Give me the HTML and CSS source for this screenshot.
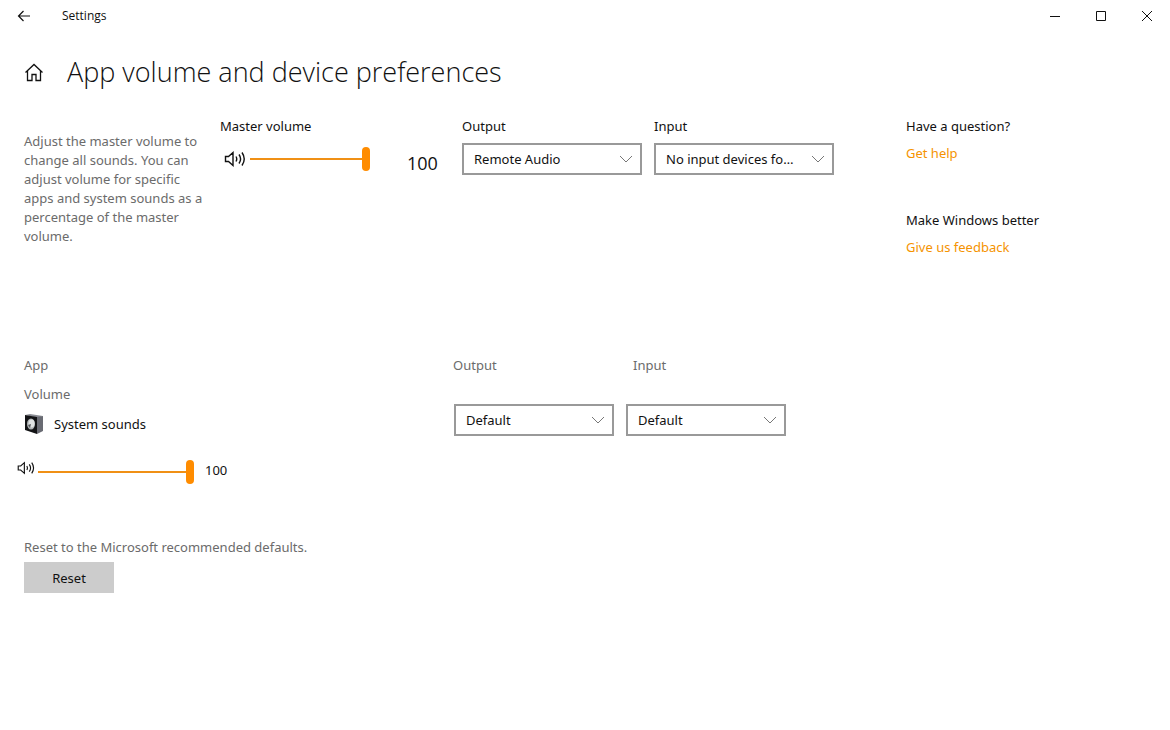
FILE: index.html
```html
<!DOCTYPE html>
<html lang="en">
<head>
    <meta charset="UTF-8">
    <meta name="viewport" content="width=device-width, initial-scale=1.0">
    <title>Settings</title>
    <link rel="stylesheet" href="styles.css">
</head>
<body>
    <header class="titlebar">
        <button type="button" class="back" aria-label="Back">
            <svg width="14" height="12" viewBox="0 0 14 12"><path d="M13 6H1.500M6.500 1L1.500 6l5 5"/></svg>
        </button>
        <span class="app-name">Settings</span>
        <div class="window-buttons">
            <button type="button" aria-label="Minimize">
                <svg width="12" height="12" viewBox="0 0 12 12"><path d="M1 6.500h10"/></svg>
            </button>
            <button type="button" aria-label="Maximize">
                <svg width="12" height="12" viewBox="0 0 12 12"><path d="M1.500 1.500h9v9h-9z"/></svg>
            </button>
            <button type="button" aria-label="Close">
                <svg width="12" height="12" viewBox="0 0 12 12"><path d="M1 1l10 10M11 1L1 11"/></svg>
            </button>
        </div>
    </header>

    <div class="page-title">
        <a href="#" class="home" aria-label="Home">
            <svg width="20" height="20" viewBox="0 0 20 20"><path d="M1.500 10.500L10 2.500l8.500 8M3.500 9v9.500h4.500v-6h4v6h4.500V9"/></svg>
        </a>
        <h1>App volume and device preferences</h1>
    </div>

    <main>
        <section class="master">
            <p class="description">Adjust the master volume to change all sounds. You can adjust volume for specific apps and system sounds as a percentage of the master volume.</p>
            <div class="field">
                <label for="masterVolume">Master volume</label>
                <div class="volume master-volume">
                    <svg class="speaker" width="22" height="18" viewBox="0 0 22 18"><path d="M1.500 6.500v5h3l4.500 4v-13l-4.500 4zM12 6.500q1.500 2.500 0 5M15 4.500q3.200 4.500 0 9M18 2.500q4.500 6.500 0 13"/></svg>
                    <input type="range" id="masterVolume" min="0" max="100" value="100">
                    <output for="masterVolume">100</output>
                </div>
            </div>
            <div class="field">
                <label for="masterOutput">Output</label>
                <select id="masterOutput">
                    <option>Remote Audio</option>
                </select>
            </div>
            <div class="field">
                <label for="masterInput">Input</label>
                <select id="masterInput">
                    <option>No input devices found</option>
                </select>
            </div>
            <aside class="help">
                <h2>Have a question?</h2>
                <a href="#">Get help</a>
                <h2>Make Windows better</h2>
                <a href="#">Give us feedback</a>
            </aside>
        </section>

        <section class="apps">
            <div class="apps-head">
                <span>App</span>
                <label for="appOutput">Output</label>
                <label for="appInput">Input</label>
                <label for="appVolume">Volume</label>
            </div>
            <div class="app-row">
                <div class="app">
                    <svg width="20" height="20" viewBox="0 0 20 20">
                        <path fill="#8b8d94" d="M1 1l5-1 13 2-5 2z"/>
                        <path fill="#696b73" d="M13 3l6-1v15l-6 3z"/>
                        <path fill="#121315" d="M1 1l12 2v17L1 16z"/>
                        <ellipse cx="7" cy="10" rx="4" ry="5.500" fill="#aeb2b4"/>
                        <ellipse cx="7.500" cy="9.500" rx="3" ry="4" fill="#dfe2e2"/>
                        <path fill="#55585b" d="M4 11l3-1-1 4z"/>
                    </svg>
                    <span>System sounds</span>
                </div>
                <select id="appOutput">
                    <option>Default</option>
                </select>
                <select id="appInput">
                    <option>Default</option>
                </select>
            </div>
            <div class="volume app-volume">
                <svg class="speaker" width="18" height="16" viewBox="0 0 22 18"><path d="M1.500 6.500v5h3l4.500 4v-13l-4.500 4zM12 6.500q1.500 2.500 0 5M15 4.500q3.200 4.500 0 9M18 2.500q4.500 6.500 0 13"/></svg>
                <input type="range" id="appVolume" min="0" max="100" value="100">
                <output for="appVolume">100</output>
            </div>
        </section>

        <section class="reset">
            <p>Reset to the Microsoft recommended defaults.</p>
            <button type="button">Reset</button>
        </section>
    </main>

    <script>
        // Keep the number next to each slider up to date
        document.querySelectorAll("input[type=range]").forEach(function(slider) {
            slider.addEventListener("input", function() {
                slider.parentElement.querySelector("output").value = slider.value;
            });
        });
    </script>
</body>
</html>
```
FILE: styles.css
```css
* {
    box-sizing: border-box;
}
body {
    margin: 0;
    background-color: #fff;
    color: #111;
    font-family: "Noto Sans", "Open Sans", sans-serif;
    font-size: 13px;
    line-height: 20px;
}
h1, h2, p {
    margin: 0;
    font-weight: 400;
}
button, select {
    font: inherit;
    color: inherit;
}
svg {
    display: block;
    flex: none;
}
.titlebar {
    display: flex;
    align-items: center;
    height: 32px;
}
.titlebar button {
    display: flex;
    align-items: center;
    justify-content: center;
    width: 46px;
    height: 32px;
    padding: 0;
    border: none;
    background: none;
}
.window-buttons button:hover {
    background-color: #e5e5e5;
}
.titlebar .back {
    width: 48px;
}
.titlebar path,
.home path,
.speaker path {
    fill: none;
    stroke: #111;
}
.titlebar .back path {
    stroke-width: 1.2;
}
.app-name {
    margin-left: 14px;
    font-family: "Open Sans", sans-serif;
    font-size: 12px;
}
.window-buttons {
    display: flex;
    margin-left: auto;
}
.page-title {
    display: flex;
    align-items: center;
    gap: 23px;
    padding: 20px 24px;
}
.home path {
    stroke-width: 1.3;
}
.speaker path {
    stroke-width: 1.4;
}
h1 {
    font-family: "Open Sans", sans-serif;
    font-size: 27px;
    font-weight: 300;
    line-height: 40px;
}
.master {
    display: grid;
    grid-template-columns: 184px 230px 180px 180px 1fr;
    column-gap: 12px;
    align-items: start;
    padding: 4px 24px 0;
}
.description {
    padding-top: 16px;
    color: #6b6b6b;
    line-height: 19px;
}
.field {
    display: flex;
    flex-direction: column;
    gap: 7px;
}
.volume {
    display: flex;
    align-items: center;
}
.master-volume {
    padding: 2px 0 0 4px;
}
.master-volume output {
    padding-top: 8px;
    font-family: "Open Sans", sans-serif;
    font-size: 18px;
}
select {
    width: 100%;
    height: 32px;
    padding: 0 34px 0 10px;
    border: 2px solid #999;
    border-radius: 0;
    appearance: none;
    background: #fff url("data:image/svg+xml,%3Csvg xmlns='http://www.w3.org/2000/svg' width='14' height='8'%3E%3Cpath d='M1 1l6 6 6-6' fill='none' stroke='%23777'/%3E%3C/svg%3E") no-repeat right 7px center;
    text-overflow: ellipsis;
}
input[type="range"] {
    width: 120px;
    height: 24px;
    margin: 0 37px 0 4px;
    appearance: none;
    background: linear-gradient(#f09015, #f09015) center / 100% 2px no-repeat;
}
input[type="range"]::-webkit-slider-thumb {
    width: 8px;
    height: 24px;
    border-radius: 4px;
    appearance: none;
    background-color: #ff8c00;
}
.help {
    padding-left: 60px;
}
.help h2 {
    font-size: 13px;
    line-height: 20px;
}
.help a {
    display: block;
    margin: 7px 0 47px;
    color: #f59300;
    text-decoration: none;
}
.apps {
    padding: 51px 24px 0;
}
.apps-head {
    display: grid;
    grid-template-columns: 429px 180px 1fr;
    row-gap: 9px;
    color: #6b6b6b;
}
.app-row {
    display: grid;
    grid-template-columns: 418px 160px 160px;
    column-gap: 12px;
    align-items: center;
}
.app {
    display: flex;
    align-items: center;
    gap: 10px;
    padding-top: 8px;
}
.app-volume {
    align-items: flex-start;
    margin: 24px 0 0 -7px;
}
.app-volume input[type="range"] {
    width: 156px;
    margin: 0 11px 0 3px;
}
.reset {
    padding: 53px 24px 24px;
    color: #6b6b6b;
}
.reset button {
    width: 90px;
    height: 31px;
    margin-top: 5px;
    border: none;
    background-color: #ccc;
    color: #111;
}
.reset button:hover {
    background-color: #bbb;
}
```
